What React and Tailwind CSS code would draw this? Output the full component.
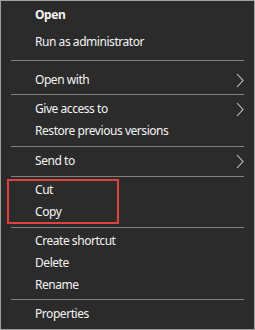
import React from 'react';

const font = { fontFamily: '"Noto Sans", "Open Sans", sans-serif' };

function Chevron() {
  return (
    <svg width="8" height="15" viewBox="0 0 8 15" className="shrink-0">
      <polyline points="1,1 7,7.5 1,14" fill="none" stroke="#c8c8c8" strokeWidth="1.1" />
    </svg>
  );
}

function Item({ label, bold, sub, className = '' }) {
  return (
    <div className={`flex h-[22px] items-center justify-between pl-[34px] pr-[10px] ${className}`}>
      <span className={`text-[12px] leading-[22px] tracking-[-0.45px] text-[#f4f4f4] ${bold ? 'font-bold' : ''}`}>{label}</span>
      {sub && <Chevron />}
    </div>
  );
}

function Sep({ className }) {
  return <div className={`mx-[10px] h-px bg-[#808080] ${className}`} />;
}

export default function App() {
  return (
    <div className="relative h-[330px] w-[255px] border border-[#a0a0a0] bg-[#2b2b2b] pt-[3px]" style={font}>
      <Item label="Open" bold className="mb-[5px]" />
      <Item label="Run as administrator" />
      <Sep className="mt-[7px] mb-[8px]" />
      <Item label="Open with" sub />
      <Sep className="mt-[3px] mb-[3px]" />
      <Item label="Give access to" sub />
      <Item label="Restore previous versions" />
      <Sep className="mt-[4px] mb-[3px]" />
      <Item label="Send to" sub />
      <Sep className="mt-[4px] mb-[2px]" />
      <Item label="Cut" />
      <Item label="Copy" />
      <Sep className="mt-[4px] mb-[2px]" />
      <Item label="Create shortcut" />
      <Item label="Delete" />
      <Item label="Rename" />
      <Sep className="mt-[3px] mb-[3px]" />
      <Item label="Properties" />

      {/* annotation box */}
      <div className="absolute left-[6px] top-[178px] h-[45px] w-[112px] border-2 border-[#e2403c]" />
    </div>
  );
}
